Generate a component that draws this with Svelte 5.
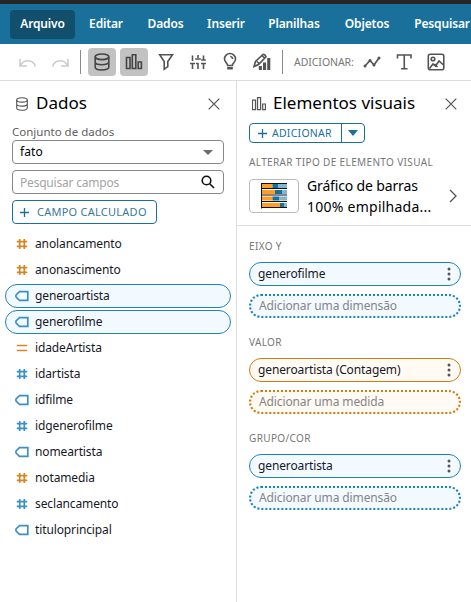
<script>
  const menus = [
    { label: 'Arquivo', width: 65, active: true },
    { label: 'Editar', width: 54 },
    { label: 'Dados', width: 57 },
    { label: 'Inserir', width: 56 },
    { label: 'Planilhas', width: 72 },
    { label: 'Objetos', width: 66 },
    { label: 'Pesquisar', width: 76 }
  ];
  const fields = [
    { name: 'anolancamento', icon: 'hash', tone: 'orange' },
    { name: 'anonascimento', icon: 'hash', tone: 'orange' },
    { name: 'generoartista', icon: 'tag', tone: 'blue', selected: true },
    { name: 'generofilme', icon: 'tag', tone: 'blue', selected: true },
    { name: 'idadeArtista', icon: 'equal', tone: 'orange' },
    { name: 'idartista', icon: 'hash', tone: 'blue' },
    { name: 'idfilme', icon: 'tag', tone: 'blue' },
    { name: 'idgenerofilme', icon: 'hash', tone: 'blue' },
    { name: 'nomeartista', icon: 'tag', tone: 'blue' },
    { name: 'notamedia', icon: 'hash', tone: 'orange' },
    { name: 'seclancamento', icon: 'hash', tone: 'blue' },
    { name: 'tituloprincipal', icon: 'tag', tone: 'blue' }
  ];
  const wells = [
    { title: 'EIXO Y', value: 'generofilme', hint: 'Adicionar uma dimensão', tone: 'blue' },
    { title: 'VALOR', value: 'generoartista (Contagem)', hint: 'Adicionar uma medida', tone: 'orange' },
    { title: 'GRUPO/COR', value: 'generoartista', hint: 'Adicionar uma dimensão', tone: 'blue' }
  ];
  const bars = [
    { y: 2, a: 11.5, b: 6 },
    { y: 8, a: 14, b: 7 },
    { y: 14.5, a: 11.5, b: 7 },
    { y: 21, a: 19, b: 4 }
  ];
</script>

{#snippet database()}
  <ellipse cx="14" cy="8.8" rx="6.8" ry="2.8" />
  <path d="M7.2 8.8v10.4c0 3.7 13.6 3.7 13.6 0V8.8M7.2 14c0 3.7 13.6 3.7 13.6 0" />
{/snippet}
{#snippet columns()}
  <path d="M6.5 9.5h3.5v11H6.5zM12.3 6.7h3.5v13.8h-3.5zM18.2 14h3.2v6.5h-3.2z" />
{/snippet}
{#snippet close()}
  <svg class="close" width="12" height="12" viewBox="0 0 12 12"><path d="M.7.7l10.6 10.6M11.3.7L.7 11.3" /></svg>
{/snippet}

<div class="app">
  <div class="strip"></div>
  <nav>
    {#each menus as m}
      <div class="menu" class:active={m.active} style:width="{m.width}px"><span>{m.label}</span></div>
    {/each}
  </nav>

  <div class="toolbar">
    <svg class="tool faded" viewBox="0 0 28 28"><path d="M6 11v7h7M6.500 17.500C10 11 19 11 21.500 18.500" /></svg>
    <svg class="tool faded" viewBox="0 0 28 28"><path d="M22 11v7h-7M21.500 17.500C18 11 9 11 6.500 18.500" /></svg>
    <i class="sep first"></i>
    <svg class="tool on" viewBox="0 0 28 28">{@render database()}</svg>
    <svg class="tool on" viewBox="0 0 28 28">{@render columns()}</svg>
    <svg class="tool" viewBox="0 0 28 28"><path d="M7.700 6.800h12.800L15.800 13.500v5.200L12.200 21.200V13.500z" /></svg>
    <svg class="tool" viewBox="0 0 28 28"><path d="M8.500 7.500v5.500M6 15.500h5M8.500 15.500v5.500M14 7v3M11.200 11h5.600M14 15V21M11.900 15.500h2.800M19.500 7.500v5M17 15.500h5M19.500 15.500v5.500M17.200 12h4.600" /></svg>
    <svg class="tool" viewBox="0 0 28 28"><path d="M11.700 17.500c0-2-3.200-3.200-3.200-6.500a5.500 5.500 0 0 1 11 0c0 3.300-3.200 4.500-3.200 6.500zM14.300 8.200q2.200.5 2.400 2.800" /><path class="wide" d="M11.200 20.200h5.600" /></svg>
    <svg class="tool" viewBox="0 0 28 28"><path d="M6 18.500l1.500-5 7.500-7q2-.5 3 2.200L10.500 16.500zM9 13.500l2 2M14 7.500l2.500 2.500" /><path class="fill" d="M10.800 18h3.100v4h-3.100zM15 14.500h3.100V22H15zM19.200 10h3.100v12h-3.100z" /></svg>
    <i class="sep second"></i>
    <span class="add-label">ADICIONAR:</span>
    <svg class="tool" viewBox="0 0 28 28"><path class="line" d="M7 18l5-5.500 4 4.500 5-7" /><g class="fill"><circle cx="7" cy="18" r="1.500" /><circle cx="12" cy="12.500" r="1.500" /><circle cx="16" cy="17" r="1.500" /><circle cx="21" cy="10" r="1.500" /></g></svg>
    <svg class="tool" viewBox="0 0 28 28"><path d="M7.500 10.500V7h13.500v3.500M14.250 7v13.500M11 20.700h6.500" /></svg>
    <svg class="tool" viewBox="0 0 28 28"><rect x="6.300" y="6.300" width="15.500" height="15.500" rx="2" /><circle cx="11" cy="11" r="1.800" /><path d="M7.500 20.500l3.500-4.500 2.500 2 3.500-5 4.500 4M12.500 16l3 3" /></svg>
  </div>

  <main>
    <section class="data">
      <header>
        <svg class="head" width="14" height="14" viewBox="6 5 16 18">{@render database()}</svg>
        <h2>Dados</h2>
        {@render close()}
      </header>
      <div class="dataset-label"><span>Conjunto de dados</span></div>
      <div class="box select"><span>fato</span><i class="caret"></i></div>
      <div class="box search"><span>Pesquisar campos</span>
        <svg width="14" height="14" viewBox="0 0 14 14"><circle cx="5.500" cy="5.500" r="4.300" /><path d="M8.700 8.700l4.300 4.300" /></svg>
      </div>
      <button class="calc"><svg width="9" height="9" viewBox="0 0 9 9"><path d="M4.500 0v9M0 4.500h9" /></svg><span>CAMPO CALCULADO</span></button>
      <ul>
        {#each fields as f}
          <li class={f.tone} class:selected={f.selected}>
            <svg width="14" height="12" viewBox="0 0 14 12">
              {#if f.icon === 'hash'}
                <path d="M4.700 1v10M9.300 1v10M1.800 3.700h10.400M1.800 8.300h10.400" />
              {:else if f.icon === 'equal'}
                <path d="M1.800 3.500h10.400M1.800 8.500h10.400" />
              {:else}
                <path class="tag" d="M4.500 1.700h8.300v8.600H4.500L1 7V5z" />
              {/if}
            </svg>
            <span>{f.name}</span>
          </li>
        {/each}
      </ul>
    </section>

    <section class="visuals">
      <div class="top">
        <header>
          <svg class="head" width="14" height="14" viewBox="6 6 16 16">{@render columns()}</svg>
          <h2>Elementos visuais</h2>
          {@render close()}
        </header>
        <button class="add">
          <svg width="9" height="9" viewBox="0 0 9 9"><path d="M4.500 0v9M0 4.500h9" /></svg><span>ADICIONAR</span><b><i class="caret"></i></b>
        </button>
        <div class="caption change"><span>ALTERAR TIPO DE ELEMENTO VISUAL</span></div>
        <div class="type">
          <div class="thumb">
            <svg width="28" height="28" viewBox="0 0 28 28">
              {#each bars as b}
                <rect x="1" y={b.y} width={b.a} height="4" fill="#ff9d27" />
                <rect x={1 + b.a} y={b.y} width={b.b} height="4" fill="#176f9b" />
                <rect x={1 + b.a + b.b} y={b.y} width={26 - b.a - b.b} height="4" fill="#86b5cf" />
              {/each}
              <path d="M1.500 1v25.500M1 1.500H27M1 6.500H27M1 13H27M1 19.500H27M1 25.500H27" stroke="#111" stroke-width="1" />
            </svg>
          </div>
          <div class="type-name"><span>Gráfico de barras</span><span class="second-line">100% empilhada...</span></div>
          <svg class="chevron" width="8" height="14" viewBox="0 0 8 14"><path d="M1 1l6 6-6 6" /></svg>
        </div>
      </div>
      <div class="wells">
        {#each wells as w}
          <div class="well {w.tone}">
            <div class="caption"><span>{w.title}</span></div>
            <div class="pill"><span>{w.value}</span>
              <svg width="4" height="14" viewBox="0 0 4 14"><circle cx="2" cy="2" r="1.500" /><circle cx="2" cy="7" r="1.500" /><circle cx="2" cy="12" r="1.500" /></svg>
            </div>
            <div class="pill hint"><span>{w.hint}</span></div>
          </div>
        {/each}
      </div>
    </section>
  </main>
</div>

<style>
  .app { width: 471px; height: 602px; overflow: hidden; background: #fff; color: #16191f; font: 12px/16px "Noto Sans", "Open Sans", sans-serif; }
  .app * { box-sizing: border-box; }
  span, h2 { white-space: nowrap; }
  svg { display: block; flex: none; fill: none; stroke: #545454; stroke-width: 1.4; }
  .strip { height: 4px; background: #262626; }
  nav { height: 40px; display: flex; align-items: center; gap: 4px; padding-left: 10px; background: #19719b; }
  .menu { flex: none; height: 29px; display: flex; align-items: center; justify-content: center; color: #fff; font-weight: 600; font-size: 12px; letter-spacing: -.15px; border-radius: 4px; }
  .menu.active { background: #124f6d; }
  .toolbar { height: 37px; display: flex; align-items: center; gap: 4px; padding-left: 14px; border-bottom: 1px solid #ddd; }
  .tool { width: 28px; height: 28px; border-radius: 4px; stroke-width: 1.6; }
  .tool.on { background: #c2c2c2; stroke: #454545; }
  .tool.faded { stroke: #ccc; }
  .fill { fill: #545454; stroke: none; }
  .wide { stroke-width: 2.5; }
  .line { stroke-width: 1.7; }
  .sep { flex: none; width: 1px; height: 24px; background: #8a8a8a; }
  .first { margin: 0 3px 0 2px; }
  .second { margin: 0 7px 0 2px; }
  .add-label { width: 60px; color: #777; font-size: 10.5px; letter-spacing: -.05px; }
  main { display: flex; height: 521px; }
  .data { flex: none; width: 237px; border-right: 1px solid #ddd; padding-top: 11px; }
  header { display: flex; align-items: center; height: 24px; }
  h2 { margin: 0; flex: 1; font-size: 17px; font-weight: 400; line-height: 24px; padding-bottom: 2px; color: #000; }
  .close { stroke-width: 1.2; }
  .head { margin-bottom: 1px; }
  .data header { padding: 0 16px 0 15px; }
  .data h2 { padding-left: 7px; }
  .dataset-label { height: 24px; padding: 8px 0 0 12px; color: #606060; font-size: 11.5px; }
  .box { width: 212px; height: 24px; margin: 0 0 6px 12px; border: 1px solid #878787; border-radius: 4px; padding: 0 8px 0 7px; display: flex; align-items: center; justify-content: space-between; }
  .select { color: #000; letter-spacing: .1px; }
  .search { color: #a4a4a4; letter-spacing: -.2px; }
  .search { padding-top: 1px; }
  .search svg { stroke: #111; stroke-width: 1.6; margin-top: -1px; }
  .caret { display: block; border: 5px solid transparent; border-top-color: #6b6b6b; border-bottom: 0; margin-right: 2px; }
  button { display: flex; align-items: center; margin: 0; padding: 0; background: #fff; border: 1px solid #19719b; border-radius: 4px; color: #3a789b; font: 11px/16px "Noto Sans", sans-serif; }
  button svg { stroke: #19719b; stroke-width: 1.3; }
  .calc { width: 145px; height: 24px; margin-left: 12px; padding-left: 7px; gap: 8px; letter-spacing: .25px; }
  ul { list-style: none; margin: 8px 0 0 5px; padding: 0; display: flex; flex-direction: column; gap: 2px; }
  li { width: 226px; height: 24px; display: flex; align-items: center; gap: 6px; padding-left: 9px; border: 1px solid transparent; border-radius: 12px; letter-spacing: -.12px; }
  li.selected { border-color: #1f83ba; background: #f2faff; }
  li svg { stroke: #3990c5; stroke-width: 1.7; }
  li.orange svg { stroke: #d38622; }
  .visuals { width: 234px; }
  .top { height: 145px; padding: 11px 0 0 12px; border-bottom: 1px solid #ddd; }
  .top header { padding: 0 14px 0 3px; }
  .top h2 { padding-left: 7px; }
  .add { width: 116px; height: 20px; margin-top: 7px; padding-left: 8px; gap: 5px; color: #19719b; font-size: 10.5px; letter-spacing: .25px; }
  .add b { height: 18px; margin-left: auto; width: 23px; border-left: 1px solid #19719b; display: flex; align-items: center; justify-content: center; }
  .add .caret { border-top-color: #19719b; margin: 0; border-top-width: 6px; }
  .caption { height: 16px; color: #777; font-size: 10px; letter-spacing: .36px; }
  .change { margin-top: 11px; }
  .type { display: flex; align-items: center; height: 42px; margin-top: 5px; }
  .thumb { width: 50px; height: 34px; border: 1px solid #bbb; border-radius: 4px; display: flex; align-items: center; justify-content: center; }
  .thumb svg { stroke: none; }
  .type-name { width: 150px; padding-left: 8px; display: flex; flex-direction: column; font-size: 14px; line-height: 21px; letter-spacing: -.15px; color: #000; }
  .second-line { letter-spacing: .25px; }
  .chevron { stroke: #545454; stroke-width: 1.3; }
  .wells { padding: 12px 0 0 12px; display: flex; flex-direction: column; gap: 16px; }
  .well { height: 80px; --line: #1f83ba; --tint: #f2faff; }
  .well.orange { --line: #cf7c0b; --tint: #fffbf4; }
  .pill { width: 212px; height: 24px; margin-top: 8px; padding: 0 9px 0 8px; display: flex; align-items: center; justify-content: space-between; background: var(--tint); border: 1px solid var(--line); border-radius: 12px; letter-spacing: -.12px; }
  .pill svg { fill: #545454; stroke: none; }
  .hint { border: 2px dotted var(--line); color: #858585; }
</style>
